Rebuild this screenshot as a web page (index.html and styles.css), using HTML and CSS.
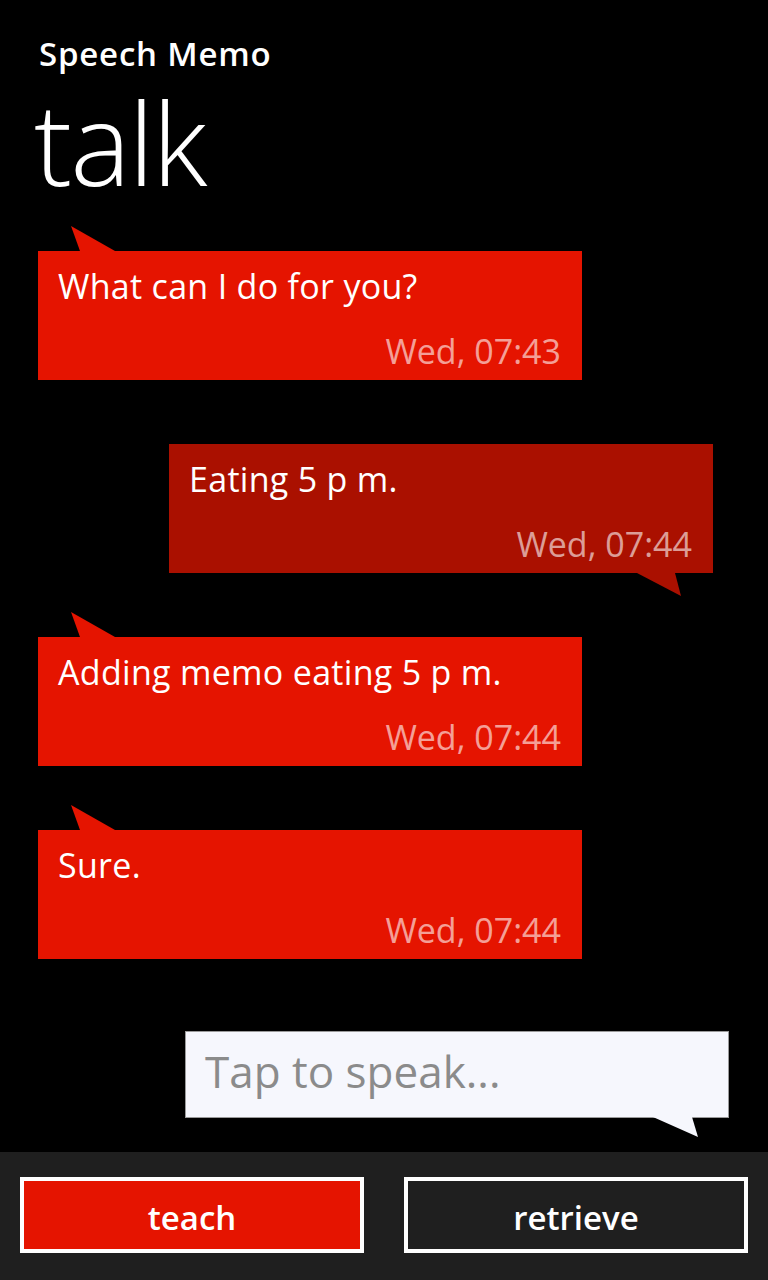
FILE: index.html
```html
<!DOCTYPE html>
<html lang="en">
<head>
<meta charset="utf-8">
<title>Speech Memo</title>
<link rel="stylesheet" href="styles.css">
</head>
<body>
<div class="screen">
  <header class="header">
    <div class="app-title">Speech Memo</div>
    <h1 class="page-title">talk</h1>
  </header>
  <main class="messages">
    <div class="bubble received">
      <div class="msg">What can I do for you?</div>
      <div class="time">Wed, 07:43</div>
    </div>
    <div class="bubble sent">
      <div class="msg">Eating 5 p m.</div>
      <div class="time">Wed, 07:44</div>
    </div>
    <div class="bubble received">
      <div class="msg">Adding memo eating 5 p m.</div>
      <div class="time">Wed, 07:44</div>
    </div>
    <div class="bubble received">
      <div class="msg">Sure.</div>
      <div class="time">Wed, 07:44</div>
    </div>
    <div class="input">Tap to speak...</div>
  </main>
  <footer class="appbar">
    <button class="btn primary">teach</button>
    <button class="btn">retrieve</button>
  </footer>
</div>
</body>
</html>
```

FILE: styles.css
```css
* { box-sizing: border-box; }
html, body { margin: 0; padding: 0; background: #000; }
body {
  font-family: "Open Sans", "Noto Sans", sans-serif;
  color: #fff;
}
.screen {
  width: 768px;
  height: 1280px;
  display: flex;
  flex-direction: column;
  overflow: hidden;
}
.header {
  padding: 30px 0 0 38px;
}
.app-title {
  font-size: 33px;
  font-weight: 600;
  line-height: 48px;
  margin-left: 1px;
  letter-spacing: 0.8px;
}
.page-title {
  margin: 0 0 0 -4px;
  font-size: 114px;
  font-weight: 300;
  line-height: 128px;
  letter-spacing: -2px;
}
.messages {
  flex: 1;
  display: flex;
  flex-direction: column;
  padding: 0 55px 0 38px;
  margin-top: 45px;
}
.bubble {
  position: relative;
  width: 544px;
  height: 129px;
  padding: 12px 21px 0 20px;
  background: #e51400;
  font-size: 34px;
  line-height: 46px;
  letter-spacing: 0.3px;
}
.bubble + .bubble { margin-top: 64px; }
.bubble.received { align-self: flex-start; }
.bubble.sent { align-self: flex-end; background: #aa1000; }
.bubble.received::before {
  content: "";
  position: absolute;
  left: 33px;
  top: -25px;
  width: 44px;
  height: 25px;
  background: inherit;
  clip-path: polygon(0 0, 9px 100%, 100% 100%);
}
.bubble.sent::after {
  content: "";
  position: absolute;
  right: 32px;
  top: 100%;
  width: 44px;
  height: 23px;
  background: inherit;
  clip-path: polygon(0 0, 38px 0, 100% 100%);
}
.time {
  text-align: right;
  margin-top: 19px;
  letter-spacing: 0;
  color: rgba(255, 255, 255, 0.6);
}
.input {
  position: relative;
  align-self: flex-end;
  width: 544px;
  height: 87px;
  margin-top: 72px;
  margin-right: -16px;
  padding: 9px 19px 0 19px;
  background: #f6f7fd;
  border: 1px solid #9a9a9a;
  color: #8b8b8b;
  font-size: 44px;
  line-height: 60px;
}
.input::after {
  content: "";
  position: absolute;
  right: 30px;
  top: 100%;
  width: 45px;
  height: 20px;
  background: #f6f7fd;
  clip-path: polygon(0 0, 39px 0, 100% 100%);
}
.appbar {
  height: 128px;
  background: #1f1f1f;
  display: flex;
  gap: 40px;
  padding: 25px 20px 0 20px;
}
.btn {
  flex: 1;
  height: 76px;
  border: 4px solid #fff;
  background: transparent;
  color: #fff;
  font-family: "Open Sans", "Noto Sans", sans-serif;
  font-size: 33px;
  font-weight: 600;
  padding: 4px 0 0 0;
}
.btn.primary { background: #e51400; }
```
